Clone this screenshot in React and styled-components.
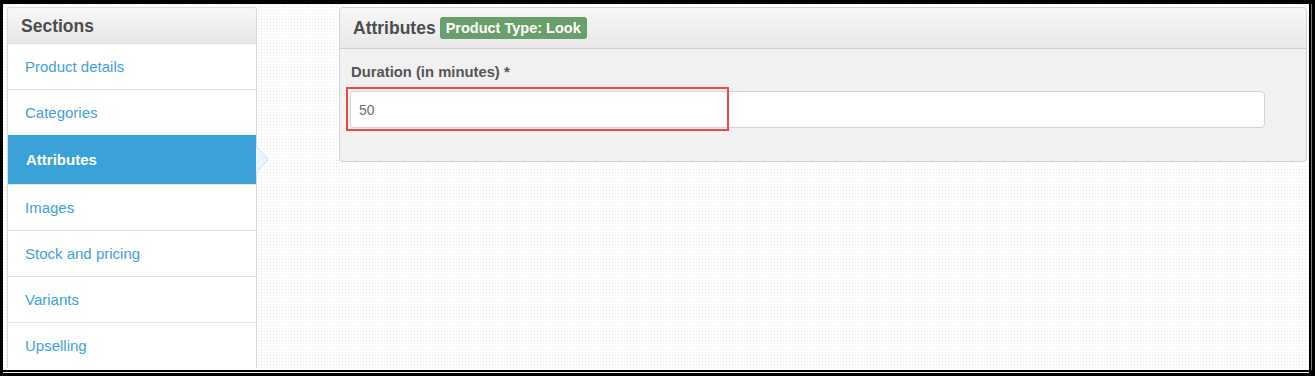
import React from "react";
import styled, { createGlobalStyle } from "styled-components";

const Global = createGlobalStyle`
  html, body { margin: 0; padding: 0; background: #000; }
  body { font-family: "Liberation Sans", Arial, sans-serif; }
  * { box-sizing: border-box; }
`;

const Frame = styled.div`
  width: 1315px;
  height: 376px;
  background: #000;
  padding: 4px 6px 6px 3px;
`;

const Canvas = styled.div`
  height: 366px;
  background-color: #fff;
  background-image: conic-gradient(from 270deg at 1px 1px, #e8e8e8 90deg, #fff 0);
  background-size: 3px 3px;
  box-shadow: 0 2px 0 #000, 0 3px 0 #f2f2f2, 2px 0 0 #000, 3px 0 0 #777;
  display: flex;
  align-items: flex-start;
  padding: 3px 2px 0 4px;
`;

const Sidebar = styled.nav`
  width: 250px;
  flex: none;
  background: #fff;
  border: 1px solid #dcdcdc;
  border-bottom: none;
  border-radius: 3px 3px 0 0;
`;

const PanelHeading = styled.div`
  height: ${(p) => p.$h}px;
  display: flex;
  align-items: center;
  gap: 4px;
  padding: ${(p) => p.$top || 0}px ${(p) => p.$pad}px 0;
  background: linear-gradient(#f7f7f7, #e8e8e8);
  border-bottom: 1px solid ${(p) => p.$line};
  border-radius: 3px 3px 0 0;
`;

const HeadingText = styled.h3`
  margin: 0;
  font-size: 17.5px;
  font-weight: bold;
  color: #4d4d4d;
`;

const NavList = styled.ul`
  list-style: none;
  margin: 0;
  padding: 0;
`;

const NavItem = styled.li`
  position: relative;
  display: flex;
  align-items: center;
  padding-left: ${(p) => (p.$active ? 18 : 17)}px;
  font-size: 15px;
  font-weight: ${(p) => (p.$active ? "bold" : "normal")};
  color: ${(p) => (p.$active ? "#fff" : "#40a1da")};
  background: ${(p) => (p.$active ? "#3ba2d8" : "#fff")};
  border-top: ${(p) => (p.$active || p.$first ? "none" : "1px solid #e4e4e4")};
  height: ${(p) => (p.$active ? 49 : p.$first ? 45 : 46)}px;
`;

const Arrow = styled.svg`
  position: absolute;
  right: -13px;
  top: 11px;
  width: 13px;
  height: 27px;
`;

const Main = styled.section`
  flex: 1;
  margin-left: 82px;
  background: #f1f1f1;
  border: 1px solid #d2d2d2;
  border-radius: 4px;
`;

const Badge = styled.span`
  display: inline-flex;
  align-items: center;
  height: 22px;
  padding: 0 6px;
  border-radius: 3px;
  background: #6a9e6a;
  color: #fff;
  font-size: 14.5px;
  font-weight: bold;
`;

const PanelBody = styled.div`
  padding: 13px 41px 33px 10px;
`;

const FieldLabel = styled.label`
  display: block;
  font-size: 14.8px;
  line-height: 20px;
  font-weight: bold;
  color: #555;
  margin-bottom: 9px;
  padding-left: 1px;
`;

const InputWrap = styled.div`
  position: relative;
`;

const TextInput = styled.div`
  height: 37px;
  display: flex;
  align-items: center;
  padding: 0 8px;
  background: #fff;
  border: 1px solid #d4d4d4;
  border-radius: 4px;
  font-size: 14px;
  color: #6f6f6f;
`;

const Highlight = styled.div`
  position: absolute;
  left: -4px;
  top: -4px;
  width: 383px;
  height: 44px;
  border: 2px solid #ee4747;
  pointer-events: none;
`;

const sections = [
  "Product details",
  "Categories",
  "Attributes",
  "Images",
  "Stock and pricing",
  "Variants",
  "Upselling",
];

export default function App() {
  return (
    <>
      <Global />
      <Frame>
        <Canvas>
          <Sidebar>
            <PanelHeading $h={36} $pad={13} $top={2} $line="#dedede">
              <HeadingText>Sections</HeadingText>
            </PanelHeading>
            <NavList>
              {sections.map((s, i) => {
                const active = s === "Attributes";
                return (
                  <NavItem key={s} $active={active} $first={i === 0}>
                    {s}
                    {active && (
                      <Arrow viewBox="0 0 13 27">
                        <path d="M0 0 L12 13.5 L0 27 Z" fill="#eaf5fd" />
                        <path d="M0 0 L12 13.5 L0 27" fill="none" stroke="#d8d8d8" strokeWidth="1" />
                      </Arrow>
                    )}
                  </NavItem>
                );
              })}
            </NavList>
          </Sidebar>
          <Main>
            <PanelHeading $h={41} $pad={13} $line="#cfcfcf">
              <HeadingText>Attributes</HeadingText>
              <Badge>Product Type: Look</Badge>
            </PanelHeading>
            <PanelBody>
              <FieldLabel>Duration (in minutes) *</FieldLabel>
              <InputWrap>
                <TextInput>50</TextInput>
                <Highlight />
              </InputWrap>
            </PanelBody>
          </Main>
        </Canvas>
      </Frame>
    </>
  );
}
